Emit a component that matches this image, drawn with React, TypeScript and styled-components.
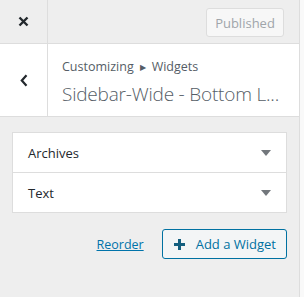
import * as React from "react";
import styled, { createGlobalStyle } from "styled-components";

const GlobalStyle = createGlobalStyle`
  html, body {
    margin: 0;
    padding: 0;
    background: #fff;
  }
  body {
    font-family: "Open Sans", "Noto Sans", sans-serif;
    color: #23282d;
  }
`;

const Page = styled.div`
  display: flex;
  width: 304px;
  height: 297px;
`;

const Sidebar = styled.aside`
  width: 299px;
  flex-shrink: 0;
  background: #eee;
  border-right: 1px solid #ddd;
  display: flex;
  flex-direction: column;
`;

const Preview = styled.div`
  flex: 1;
  background: #f9f9f9;
`;

const HeaderActions = styled.div`
  height: 43px;
  display: flex;
  align-items: flex-start;
  border-bottom: 1px solid #ddd;
`;

const IconButton = styled.div`
  width: 47px;
  align-self: stretch;
  border-right: 1px solid #ddd;
  display: flex;
  align-items: center;
  justify-content: center;
  color: #23282d;
`;

const PublishedButton = styled.div`
  margin: 8px 15px 0 auto;
  width: 76px;
  height: 27px;
  border: 1px solid #ddd;
  border-radius: 3px;
  background: #f7f7f7;
  color: #a0a5aa;
  font-size: 13px;
  display: flex;
  align-items: center;
  justify-content: center;
`;

const SectionHeader = styled.div`
  height: 72px;
  background: #fff;
  border-bottom: 1px solid #ddd;
  display: flex;
`;

const SectionTitle = styled.div`
  flex: 1;
  min-width: 0;
  padding: 10px 8px 0 14px;
  display: flex;
  flex-direction: column;
`;

const Breadcrumb = styled.span`
  font-size: 12.5px;
  line-height: 26px;
  color: #555d66;
`;

const Crumb = styled.span`
  font-size: 8px;
  margin: 0 6px;
  position: relative;
  top: -1px;
`;

const Title = styled.h3`
  margin: 0;
  font-size: 19px;
  font-weight: 300;
  line-height: 26px;
  letter-spacing: -0.2px;
  color: #555d66;
  white-space: nowrap;
`;

const Content = styled.div`
  padding: 15px 12px;
  display: flex;
  flex-direction: column;
`;

const WidgetList = styled.div`
  display: flex;
  flex-direction: column;
`;

const WidgetRow = styled.div`
  height: 39px;
  background: #fff;
  border: 1px solid #ddd;
  margin-top: -1px;
  display: flex;
  align-items: center;
  padding: 0 15px;
  font-size: 13px;
  color: #23282d;

  &:first-child {
    margin-top: 0;
  }

  span {
    flex: 1;
  }
`;

const Actions = styled.div`
  margin-top: 16px;
  display: flex;
  justify-content: flex-end;
  align-items: center;
  gap: 18px;
`;

const ReorderLink = styled.a`
  font-size: 12.5px;
  color: #0073aa;
  text-decoration: underline;
`;

const AddButton = styled.div`
  height: 28px;
  border: 1px solid #0071a1;
  border-radius: 3px;
  background: #f3f5f6;
  color: #0071a1;
  font-size: 13px;
  display: flex;
  align-items: center;
  gap: 11px;
  padding: 0 10px 0 11px;
`;

const CloseIcon = () => (
  <svg width="11" height="11" viewBox="0 0 11 11">
    <path d="M1.5 1.5 L9.5 9.5 M9.5 1.5 L1.5 9.5" stroke="#23282d" strokeWidth="2.4" />
  </svg>
);

const BackIcon = () => (
  <svg width="8" height="13" viewBox="0 0 8 13">
    <path d="M6.5 1.2 L1.8 6.5 L6.5 11.8" stroke="#23282d" strokeWidth="2.2" fill="none" />
  </svg>
);

const Caret = () => (
  <svg width="10" height="6" viewBox="0 0 10 6">
    <path d="M0 0 H10 L5 6 Z" fill="#72777c" />
  </svg>
);

const PlusIcon = () => (
  <svg width="11" height="11" viewBox="0 0 11 11">
    <path d="M5.5 0 V11 M0 5.5 H11" stroke="#135e7e" strokeWidth="3" />
  </svg>
);

const widgets = ["Archives", "Text"];

export default function App() {
  return (
    <Page>
      <GlobalStyle />
      <Sidebar>
        <HeaderActions>
          <IconButton>
            <CloseIcon />
          </IconButton>
          <PublishedButton>Published</PublishedButton>
        </HeaderActions>
        <SectionHeader>
          <IconButton>
            <BackIcon />
          </IconButton>
          <SectionTitle>
            <Breadcrumb>
              Customizing<Crumb>▶</Crumb>Widgets
            </Breadcrumb>
            <Title>Sidebar-Wide - Bottom L...</Title>
          </SectionTitle>
        </SectionHeader>
        <Content>
          <WidgetList>
            {widgets.map((w) => (
              <WidgetRow key={w}>
                <span>{w}</span>
                <Caret />
              </WidgetRow>
            ))}
          </WidgetList>
          <Actions>
            <ReorderLink href="#">Reorder</ReorderLink>
            <AddButton>
              <PlusIcon />
              Add a Widget
            </AddButton>
          </Actions>
        </Content>
      </Sidebar>
      <Preview />
    </Page>
  );
}
